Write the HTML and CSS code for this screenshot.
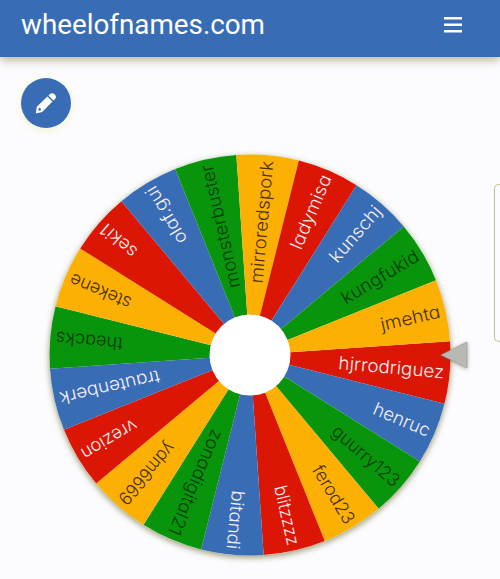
FILE: index.html
```html
<!DOCTYPE html>
<html lang="en">
<head>
    <meta charset="UTF-8" />
    <meta name="viewport" content="width=device-width, initial-scale=1.0" />
    <title>wheelofnames.com</title>
    <link rel="stylesheet" href="styles.css">
</head>
<body>

<header class="navbar">
    <span class="brand">wheelofnames.com</span>
    <svg class="menu-icon" width="18" height="16" viewBox="0 0 18 16">
        <path d="M0 0h18v2.6H0zM0 6.5h18v2.6H0zM0 13h18v2.6H0z" />
    </svg>
</header>

<main class="page">
    <button class="edit-btn" aria-label="Edit">
        <svg width="22" height="22" viewBox="0 0 22 22">
            <path d="M.8 21.4l1-6.6L12.4 4.6l5 5L7.2 19.9z" />
            <path d="M13.4 3.6l1.9-1.8q2.2-1.6 4.4.6t.6 4.4l-1.9 1.8z" />
            <circle class="pencil-tip" cx="4.6" cy="17.4" r="1.3" />
        </svg>
    </button>

    <div class="wheel-area">
        <svg class="wheel" width="420" height="420" viewBox="-210 -210 420 420">
            <circle class="wheel-shadow" r="200.5" />
            <g id="slices"></g>
            <circle class="hub" r="40.5" />
        </svg>
        <svg class="pointer" width="28" height="28" viewBox="0 0 28 28">
            <path d="M0 14L26 1V27z" />
        </svg>
    </div>

    <div class="side-panel"></div>
</main>

<script src="script.js"></script>
</body>
</html>
```
FILE: styles.css
```css
body {
    margin: 0;
    height: 579px;
    overflow: hidden;
    background-color: #fcfcff;
    font-family: Roboto, sans-serif;
}

.navbar {
    position: relative;
    display: flex;
    justify-content: space-between;
    align-items: center;
    box-sizing: border-box;
    height: 57px;
    padding: 0 38px 8px 21px;
    background-color: #386cb5;
    color: #fff;
    box-shadow: 0 2px 10px rgba(110, 110, 50, 0.6);
}

.brand {
    font-size: 27.8px;
    line-height: 48px;
}

.menu-icon {
    fill: #fff;
}

.page {
    position: relative;
    padding: 21px 0 0 21px;
}

.edit-btn {
    display: flex;
    justify-content: center;
    align-items: center;
    width: 50px;
    height: 50px;
    padding: 0;
    border: none;
    border-radius: 50%;
    background-color: #386cb5;
    box-shadow: 0 2px 8px rgba(230, 230, 110, 0.4);
}

.edit-btn svg {
    fill: #fff;
}

.edit-btn .pencil-tip {
    fill: #386cb5;
}

.wheel-area {
    position: relative;
    width: 420px;
    margin: 17px 0 0 19px;
}

.wheel {
    display: block;
}

.wheel-shadow {
    fill: #fff;
    filter: drop-shadow(0 2px 3px rgba(110, 110, 50, 0.7));
}

.hub {
    fill: #fff;
}

.slice-blue {
    fill: #386cb5;
}

.slice-red {
    fill: #dc1604;
}

.slice-green {
    fill: #08940b;
}

.slice-yellow {
    fill: #fcb004;
}

.label {
    font-family: Inter, "Open Sans", sans-serif;
    font-size: 18px;
    font-weight: 300;
    font-feature-settings: "cv11";
    text-anchor: end;
}

.label-light {
    fill: #f8eef2;
}

.label-dark {
    fill: #4a3000;
}

.slice-green + .label-dark {
    fill: #033c05;
}

/* sits over the rim of the wheel */
.pointer {
    position: absolute;
    top: 196px;
    left: 401px;
    fill: #b8b8b4;
    stroke: #999;
    stroke-width: 0.6;
    filter: drop-shadow(0 1px 2px rgba(80, 80, 60, 0.5));
}

/* only its left edge is on screen */
.side-panel {
    position: absolute;
    top: 127px;
    right: 0;
    width: 5px;
    height: 156px;
    border: 1px solid #c4c09a;
    border-right: none;
    border-radius: 5px 0 0 5px;
}
```
FILE: script.js
```js
// name, text length
const names = [
    ['hjrrodriguez', 106],
    ['henruc', 60],
    ['guurry123', 83],
    ['ferod23', 65],
    ['blitzzzz', 61],
    ['bitandi', 59],
    ['zonadigital21', 113],
    ['ydm6669', 76],
    ['vrezion', 62],
    ['trautenberk', 102],
    ['theacks', 67],
    ['stekene', 65],
    ['seki1', 42],
    ['olaf.gui', 64],
    ['monsterbuster', 126],
    ['mirroredspork', 123],
    ['ladymisa', 79],
    ['kunschj', 69],
    ['kungfukid', 87],
    ['jmehta', 61]
];
const colors = ['red', 'blue', 'green', 'yellow'];
const radius = 200.5;
const step = 360 / names.length;
const start = -3.9;

function point(deg) {
    const rad = deg * Math.PI / 180;
    return `${(radius * Math.cos(rad)).toFixed(2)} ${(radius * Math.sin(rad)).toFixed(2)}`;
}

let html = '';
names.forEach(([name, length], i) => {
    const color = colors[i % 4];
    const from = start + i * step;
    const tone = color === 'red' || color === 'blue' ? 'light' : 'dark';
    html += `
        <path class="slice-${color}" d="M0 0L${point(from)}A${radius} ${radius} 0 0 1 ${point(from + step)}z" />
        <text class="label label-${tone}" x="195" y="6" textLength="${length}" lengthAdjust="spacingAndGlyphs" transform="rotate(${from + step / 2})">${name}</text>`;
});
document.getElementById('slices').innerHTML = html;
```
